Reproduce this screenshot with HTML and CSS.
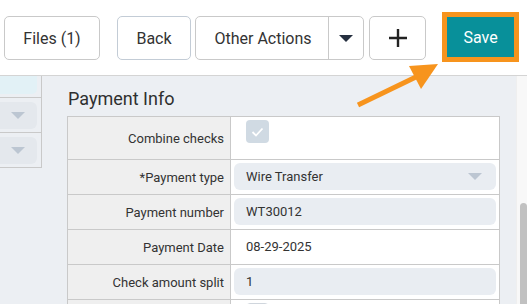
FILE: index.html
```html
<!DOCTYPE html>
<html lang="en">
<head>
  <meta charset="UTF-8" />
  <title>Payment Info</title>
  <link rel="stylesheet" href="styles.css">
</head>
<body>
  <div class="topbar">
    <button class="btn btn-files">Files (1)</button>
    <button class="btn btn-back">Back</button>
    <div class="btn-group">
      <span class="group-label">Other Actions</span>
      <span class="group-caret"><span class="caret-dark"></span></span>
    </div>
    <button class="btn btn-plus">
      <svg width="18" height="18" viewBox="0 0 18 18"><path d="M9 0v18M0 9h18" stroke="#222" stroke-width="2.4"/></svg>
    </button>
    <div class="save-wrap">
      <button class="btn-save">Save</button>
    </div>
  </div>

  <div class="main">
    <div class="sidebar">
      <div class="side-item side-active"></div>
      <div class="side-item"><span class="side-box"><span class="caret-light"></span></span></div>
      <div class="side-item"><span class="side-box"><span class="caret-light"></span></span></div>
    </div>

    <div class="content">
      <h3 class="section-title">Payment Info</h3>
      <div class="form-table">
        <div class="row row-tall">
          <div class="label">Combine checks</div>
          <div class="value value-top">
            <span class="checkbox">
              <svg width="13" height="10" viewBox="0 0 13 10"><path d="M1.5 5l3.5 3.5 6.5-7" fill="none" stroke="#fff" stroke-width="1.8"/></svg>
            </span>
          </div>
        </div>
        <div class="row">
          <div class="label">*Payment type</div>
          <div class="value"><div class="input input-select">Wire Transfer<span class="caret-light"></span></div></div>
        </div>
        <div class="row">
          <div class="label">Payment number</div>
          <div class="value"><div class="input">WT30012</div></div>
        </div>
        <div class="row">
          <div class="label">Payment Date</div>
          <div class="value"><div class="plain">08-29-2025</div></div>
        </div>
        <div class="row">
          <div class="label">Check amount split</div>
          <div class="value"><div class="input">1</div></div>
        </div>
        <div class="row">
          <div class="label"></div>
          <div class="value value-top"><span class="checkbox checkbox-off"></span></div>
        </div>
      </div>
    </div>

    <div class="scrollbar"><div class="thumb"></div></div>
  </div>

  <svg class="arrow" width="527" height="304" viewBox="0 0 527 304">
    <line x1="358" y1="105" x2="418" y2="76" stroke="#f7941d" stroke-width="5"/>
    <polygon points="409,66 438,64 421,89" fill="#f7941d"/>
  </svg>
</body>
</html>
```

FILE: styles.css
```css
* {
  box-sizing: border-box;
}
body {
  margin: 0;
  width: 527px;
  height: 304px;
  overflow: hidden;
  font-family: Roboto, 'Liberation Sans', sans-serif;
  color: #333;
  background: #eceff3;
  position: relative;
}
.topbar {
  height: 76px;
  background: white;
  border-bottom: 1px solid #d4d4d4;
  display: flex;
  align-items: flex-start;
  padding: 16px 0 0 4px;
}
.btn {
  height: 44px;
  background: white;
  border: 1px solid #c9c9c9;
  border-radius: 5px;
  font-family: inherit;
  font-size: 16px;
  color: #333;
  padding: 0;
}
.btn-files {
  width: 96px;
}
.btn-back {
  width: 74px;
  margin-left: 17px;
  border-color: #c3ccd6;
}
.btn-group {
  width: 169px;
  height: 44px;
  margin-left: 4px;
  border: 1px solid #c9c9c9;
  border-radius: 5px;
  display: flex;
  font-size: 16px;
}
.group-label {
  width: 133px;
  border-right: 1px solid #c9c9c9;
  display: flex;
  align-items: center;
  justify-content: center;
  padding-left: 2px;
}
.group-caret {
  flex: 1;
  display: flex;
  align-items: center;
  justify-content: center;
}
.caret-dark {
  width: 0;
  height: 0;
  border-left: 7px solid transparent;
  border-right: 7px solid transparent;
  border-top: 7px solid #263040;
}
.btn-plus {
  width: 57px;
  margin-left: 5px;
  display: flex;
  align-items: center;
  justify-content: center;
}
.save-wrap {
  margin-left: 16px;
  margin-top: -4px;
  width: 77px;
  height: 50px;
  border: 5px solid #f7941d;
}
.btn-save {
  width: 100%;
  height: 100%;
  border: none;
  background: #08909a;
  color: white;
  font-family: inherit;
  font-size: 16px;
  padding: 0;
}
.main {
  display: flex;
  height: 228px;
  overflow: hidden;
}
.sidebar {
  width: 42px;
  height: 92px;
  border-right: 1px solid #c9c9c9;
  border-bottom: 1px solid #c9c9c9;
}
.side-item {
  height: 35px;
  border-bottom: 1px solid #c9c9c9;
  padding: 4px 4px 3px 0;
}
.side-active {
  height: 22px;
  padding: 0 4px 3px 0;
}
.side-active::before {
  content: "";
  display: block;
  height: 18px;
  background: #e2f1f6;
  border-radius: 0 0 5px 0;
}
.side-item:last-child {
  border-bottom: none;
}
.side-box {
  display: flex;
  height: 27px;
  background: #e4e8ed;
  border-radius: 0 6px 6px 0;
  align-items: center;
  justify-content: flex-end;
  padding-right: 12px;
}
.caret-light {
  width: 0;
  height: 0;
  border-left: 7px solid transparent;
  border-right: 7px solid transparent;
  border-top: 7px solid #bcc6d2;
}
.content {
  flex: 1;
  padding: 0 16px 0 25px;
  overflow: hidden;
}
.section-title {
  margin: 12px 0 0 1px;
  height: 28px;
  font-size: 18px;
  font-weight: 400;
  color: #2f2f2f;
}
.form-table {
  border-top: 1px solid #c9c9c9;
  border-left: 1px solid #c9c9c9;
  border-right: 1px solid #c9c9c9;
}
.row {
  display: grid;
  grid-template-columns: 163px 1fr;
  height: 35px;
  border-bottom: 1px solid #c9c9c9;
}
.row-tall {
  height: 43px;
}
.label {
  background: #efefef;
  border-right: 1px solid #c9c9c9;
  font-size: 13px;
  display: flex;
  align-items: center;
  justify-content: flex-end;
  padding-right: 6px;
}
.value {
  background: white;
  padding: 3px 3px 4px 3px;
  font-size: 13px;
}
.value-top {
  padding: 3px 0 0 15px;
}
.input {
  height: 27px;
  background: #e9edf2;
  border-radius: 6px;
  display: flex;
  align-items: center;
  padding-left: 12px;
}
.input-select {
  justify-content: space-between;
  padding-right: 14px;
}
.plain {
  height: 27px;
  display: flex;
  align-items: center;
  padding-left: 12px;
}
.checkbox {
  width: 23px;
  height: 23px;
  border-radius: 4px;
  background: #d0dae3;
  display: flex;
  align-items: center;
  justify-content: center;
}
.checkbox-off {
  background: white;
  border: 1px solid #d0d6dd;
}
.scrollbar {
  width: 11px;
  background: #f8f8f8;
  border-left: 1px solid #efefef;
  padding-top: 127px;
  padding-left: 3px;
}
.thumb {
  height: 120px;
  background: #c1c1c1;
  border-radius: 4px 4px 0 0;
}
.arrow {
  position: absolute;
  left: 0;
  top: 0;
  pointer-events: none;
}
```
